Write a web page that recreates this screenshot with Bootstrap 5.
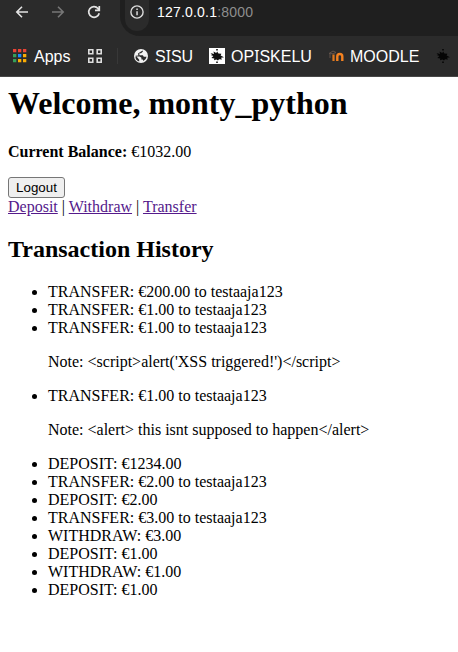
<!DOCTYPE html>
<html lang="en">
<head>
<meta charset="utf-8">
<meta name="viewport" content="width=device-width, initial-scale=1">
<title>Welcome</title>
<link href="https://cdn.jsdelivr.net/npm/bootstrap@5.3.0/dist/css/bootstrap.min.css" rel="stylesheet">
<style>
body{font:16px/18px "Liberation Serif",serif;color:#000;background:#fff;overflow:hidden}
svg{display:block;flex:none}
.chrome{height:77px;background:#2b2b2b;border-bottom:1px solid #474747;font:16px/20px "Liberation Sans",sans-serif;color:#fff;white-space:nowrap;overflow:hidden}
.toolbar{height:36px}
.nav-icons{width:120px;height:24px;padding-left:15px;gap:22px}
.omni{background:#1f1f1f;border-bottom-left-radius:20px;height:36px;padding-left:5px;font-size:14px}
.chip{width:24px;height:31px;background:#2b2b2b;border-radius:0 0 12px 12px;padding:5px}
.omni-text{padding-left:8px;height:25px;line-height:25px;letter-spacing:.2px}
.port{color:#8e8e8e}
.marks{height:40px;padding-left:13px}
.sep{width:1px;height:16px;background:#383838;margin:0 16px 0 15px}
.mark-label{margin-left:7px;flex:none;padding-top:2px}
.w-apps{width:54px}
.w-sisu{width:54px}
.w-opis{width:98px;margin-left:6px}
.w-mood{width:85px;margin-left:6px}
.serif-i{font-family:"Noto Sans",sans-serif;font-size:15.5px;line-height:1}
.page-body{padding:8px}
h1{font-size:32px;line-height:37px;font-weight:700;margin:0 0 21px}
h2{font-size:24px;line-height:27px;font-weight:700;margin:20px 0}
.logout{font:13.333px/15px "Liberation Sans",sans-serif;border:1px solid #767676;border-radius:3px;background:#efefef;color:#000;padding:2px 6px;width:57px;height:21px;display:block}
.page-body a{color:#551a8b}
.history{padding-left:40px}
.history p{margin:16px 0}
</style>
</head>
<body>
<svg width="0" height="0" class="position-absolute">
  <symbol id="bird" viewBox="0 0 16 16"><path d="M1.5 5 5 6l-.5-2.5L7.2 5 8.2 3.5l1.2 2 3 .3-.8 1.7L15 9.2l-3 .5 1 1.9-3-.3L9 12.6l-1.6-1-2.4.6.3-1.7L2.4 10l2-1.9L1.7 7l1.4-.6zM7.2 1h1.6v1.5H7.2zM7.2 13.4h1.6V15H7.2z"/></symbol>
</svg>
<header class="chrome">
  <div class="toolbar d-flex">
    <div class="nav-icons d-flex align-items-center">
      <svg width="14" height="14" viewBox="0 0 14 14" fill="none" stroke="#e3e3e3" stroke-width="1.6"><path d="M13 7H2M7 1.8 1.8 7 7 12.2"/></svg>
      <svg width="14" height="14" viewBox="0 0 14 14" fill="none" stroke="#777" stroke-width="1.6"><path d="M1 7h11M7 1.8 12.2 7 7 12.2"/></svg>
      <svg width="14" height="14" viewBox="0 0 14 14" fill="none" stroke="#e3e3e3" stroke-width="1.7"><path d="M12.2 8.2A5.3 5.3 0 1 1 11 3.5L12.2 5M12.3 1v4.4H8"/></svg>
    </div>
    <div class="omni flex-grow-1 d-flex">
      <div class="chip"><svg width="14" height="14" viewBox="0 0 14 14"><circle cx="7" cy="7" r="6.1" fill="none" stroke="#dcdcdc" stroke-width="1.4"/><path d="M6.3 6.2h1.5v4H6.3zM6.3 3.6h1.5v1.5H6.3z" fill="#dcdcdc"/></svg></div>
      <div class="omni-text">127.0.0.1<span class="port">:8000</span></div>
    </div>
  </div>
  <div class="marks d-flex align-items-center">
    <svg width="14" height="14" viewBox="0 0 14 14"><path fill="#ea4335" d="M0 0h3.3v3.3H0zM5 0h3.3v3.3H5zM10 0h3.3v3.3H10z"/><path fill="#34a05a" d="M0 5h3.3v3.3H0zM0 10h3.3v3.3H0z"/><path fill="#1a8cff" d="M5 5h3.3v3.3H5z"/><path fill="#fbad04" d="M10 5h3.3v3.3H10zM10 10h3.3v3.3H10zM5 10h3.3v3.3H5z"/></svg>
    <span class="mark-label w-apps">Apps</span>
    <svg width="14" height="14" viewBox="0 0 14 14" fill="none" stroke="#ddd" stroke-width="1.6"><path d="M.8.8h4v4h-4zM9.2.8h4v4h-4zM.8 9.2h4v4h-4zM9.2 9.2h4v4h-4z"/></svg>
    <span class="sep"></span>
    <svg width="14" height="14" viewBox="0 0 14 14"><circle cx="7" cy="7" r="7" fill="#f2f2f2"/><path d="M8.8 1.5v1.3L7 4.2H5.4v2h3.4l1 1.6h2.8q-.6 3.2-3.2 4.3L8.8 10.6H7.4V8.8L5.6 7.4H1.4q0 3.8 3.8 5.2v-1.8L3.4 8.6l-2-1.8 3-.4L4 4.6l3-2z" fill="#2b2b2b" fill-rule="evenodd"/></svg>
    <span class="mark-label w-sisu">S<span class="serif-i">I</span>SU</span>
    <svg class="bg-white" width="16" height="16"><use href="#bird" fill="#111"/></svg>
    <span class="mark-label w-opis">OP<span class="serif-i">I</span>SKELU</span>
    <svg width="15" height="14" viewBox="0 0 15 14" fill="none"><path d="M0 4.5 4 2l3 1.5-3 1.3zM1 5v4" stroke="#62534a" stroke-width="1"/><path d="M4.5 12V5.5" stroke="#e0791f" stroke-width="2.2"/><path d="M8.3 12V7.5Q8.3 5 10.8 5t2.5 2.5V12" stroke="#f58220" stroke-width="2.4"/></svg>
    <span class="mark-label w-mood">MOODLE</span>
    <svg width="16" height="16"><use href="#bird" fill="#050505"/></svg>
  </div>
</header>
<main class="page-body">
  <h1>Welcome, monty_python</h1>
  <p class="mb-3"><strong>Current Balance:</strong> €1032.00</p>
  <button class="logout">Logout</button>
  <div><a href="#">Deposit</a> | <a href="#">Withdraw</a> | <a href="#">Transfer</a></div>
  <h2>Transaction History</h2>
  <ul class="history mb-0">
    <li>TRANSFER: €200.00 to testaaja123</li>
    <li>TRANSFER: €1.00 to testaaja123</li>
    <li>TRANSFER: €1.00 to testaaja123<p>Note: &lt;script&gt;alert('XSS triggered!')&lt;/script&gt;</p></li>
    <li>TRANSFER: €1.00 to testaaja123<p>Note: &lt;alert&gt; this isnt supposed to happen&lt;/alert&gt;</p></li>
    <li>DEPOSIT: €1234.00</li>
    <li>TRANSFER: €2.00 to testaaja123</li>
    <li>DEPOSIT: €2.00</li>
    <li>TRANSFER: €3.00 to testaaja123</li>
    <li>WITHDRAW: €3.00</li>
    <li>DEPOSIT: €1.00</li>
    <li>WITHDRAW: €1.00</li>
    <li>DEPOSIT: €1.00</li>
  </ul>
</main>
<script src="https://cdn.jsdelivr.net/npm/bootstrap@5.3.0/dist/js/bootstrap.bundle.min.js"></script>
</body>
</html>
